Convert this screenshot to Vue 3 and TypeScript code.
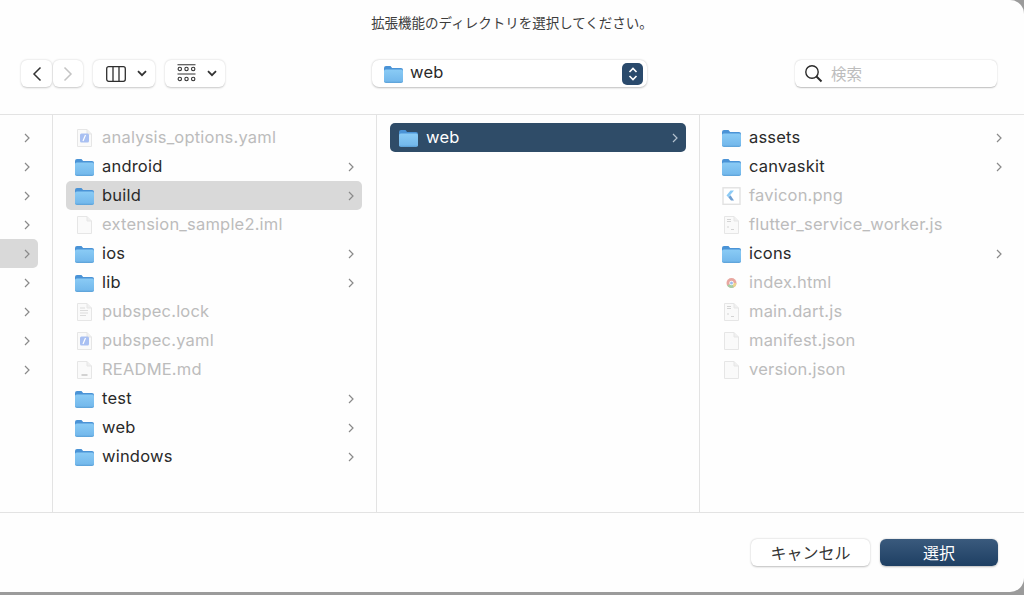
<template>
  <div class="window">
    <div class="title">拡張機能のディレクトリを選択してください。</div>

    <div class="toolbar">
      <div class="tools-left">
        <div class="nav-pair">
          <button class="tool nav">
            <svg width="12" height="16" viewBox="0 0 12 16"><path d="M9.500 1.500 3 8l6.500 6.500" fill="none" stroke="#333" stroke-width="1.500" /></svg>
          </button>
          <button class="tool nav next">
            <svg width="12" height="16" viewBox="0 0 12 16"><path d="M2.500 1.500 9 8l-6.500 6.500" fill="none" stroke="#c4c4c4" stroke-width="1.500" /></svg>
          </button>
        </div>
        <button class="tool view-columns">
          <svg width="20" height="16" viewBox="0 0 20 16" fill="none" stroke="#2e2e2e" stroke-width="1.300">
            <rect x="0.700" y="0.700" width="18.600" height="14.600" rx="2" />
            <path d="M7 1v14M13 1v14" />
          </svg>
          <svg class="caret" width="10" height="7" viewBox="0 0 10 7"><path d="m1 1.200 4 4 4-4" fill="none" stroke="#333" stroke-width="1.800" /></svg>
        </button>
        <button class="tool view-group">
          <svg class="group-icon" width="19" height="18" viewBox="0 0 19 18" fill="none" stroke="#333" stroke-width="1.100">
            <path d="M0.500 0.800h18M0.500 10h18" />
            <circle cx="2.800" cy="5" r="1.700" /><circle cx="9.500" cy="5" r="1.700" /><circle cx="16.200" cy="5" r="1.700" />
            <circle cx="2.800" cy="15" r="1.700" /><circle cx="9.500" cy="15" r="1.700" /><circle cx="16.200" cy="15" r="1.700" />
          </svg>
          <svg class="caret" width="10" height="7" viewBox="0 0 10 7"><path d="m1 1.200 4 4 4-4" fill="none" stroke="#333" stroke-width="1.800" /></svg>
        </button>
      </div>

      <div class="path-select">
        <svg class="folder" width="19" height="18" viewBox="0 0 19 18">
          <path d="M0 3a2 2 0 0 1 2-2h4.500l1.600 2H17a2 2 0 0 1 2 2v3H0Z" fill="#4a93d6" />
          <rect y="4.500" width="19" height="13.500" rx="1.800" fill="url(#folderFill)" />
        </svg>
        <span class="path-name">web</span>
        <span class="stepper">
          <svg width="12" height="16" viewBox="0 0 12 16" fill="none" stroke="#fff" stroke-width="1.600"><path d="m2.500 6 3.500-3.500L9.500 6M2.500 10 6 13.500 9.500 10" /></svg>
        </span>
      </div>

      <div class="tools-right">
        <div class="search">
          <svg width="19" height="19" viewBox="0 0 19 19" fill="none" stroke="#2b2b2b">
            <circle cx="8" cy="8" r="6.200" stroke-width="1.400" />
            <path d="m12.500 12.500 5 5" stroke-width="1.900" />
          </svg>
          <span class="search-text">検索</span>
        </div>
      </div>
    </div>

    <div class="browser">
      <div class="column stub">
        <div v-for="(on, i) in stubRows" :key="i" class="stub-row" :class="{ current: on }">
          <svg width="6" height="10" viewBox="0 0 6 10"><path d="m1 1 4 4-4 4" fill="none" stroke="#8a8a8a" stroke-width="1.200" /></svg>
        </div>
      </div>

      <div v-for="(col, c) in columns" :key="c" class="column" :class="'col' + c">
        <div
          v-for="row in col"
          :key="row.name"
          class="row"
          :class="{ off: row.icon !== 'folder', open: row.state === 'open', active: row.state === 'active' }"
        >
          <svg v-if="row.icon === 'folder'" class="folder" width="19" height="18" viewBox="0 0 19 18">
            <path d="M0 3a2 2 0 0 1 2-2h4.500l1.600 2H17a2 2 0 0 1 2 2v3H0Z" fill="#4a93d6" />
            <rect y="4.500" width="19" height="13.500" rx="1.800" fill="url(#folderFill)" />
          </svg>

          <svg v-else class="folder" width="19" height="18" viewBox="0 0 19 18">
            <template v-if="row.icon === 'chrome'">
              <circle cx="9.500" cy="9" r="5" fill="#e8a7a0" />
              <path d="M9.500 9 5.200 11.500A5 5 0 0 0 12 13.300Z" fill="#a5cfa5" />
              <path d="M9.500 9 12 13.300A5 5 0 0 0 14.500 9Z" fill="#ecd58f" />
              <circle cx="9.500" cy="9" r="2.200" fill="#fff" />
              <circle cx="9.500" cy="9" r="1.500" fill="#9dbdee" />
            </template>
            <template v-else-if="row.icon === 'png'">
              <rect x="1" y="0.800" width="17" height="16.500" fill="#fff" stroke="#e2e2e2" stroke-width="1.400" />
              <path d="M12 3.500H8.500L4.500 8.500l1.800 1.800Z" fill="#8ccbf6" />
              <path d="M6.300 10.300 8.500 8.300 12 13.500H9Z" fill="#6f9fd2" />
            </template>
            <template v-else>
              <path d="M2.500 0.500H12L16.500 5v12.500h-14Z" fill="#fafafa" stroke="#e6e6e6" />
              <path d="M12 0.500V5h4.500" fill="#f0f0f0" stroke="#e6e6e6" />
              <template v-if="row.icon === 'yaml'">
                <rect x="5" y="4.500" width="9" height="9" rx="1.500" fill="#a9c0f2" />
                <path d="M10.500 6 8 12" stroke="#fff" stroke-width="1.200" />
              </template>
              <path v-else-if="row.icon === 'lines'" d="M5 5h5M5 7.500h8M5 10h8M5 12.500h6" stroke="#dcdcdc" />
              <path v-else-if="row.icon === 'code'" d="M5 3.500h4M5 5.500h4M5 11h2M9 13.500h3" stroke="#d4d4d4" />
              <path v-else-if="row.icon === 'md'" d="M6.500 14h6" stroke="#c4c4c4" stroke-width="1.500" />
            </template>
          </svg>

          <span class="name">{{ row.name }}</span>
          <svg v-if="row.icon === 'folder'" class="chev" width="6" height="10" viewBox="0 0 6 10">
            <path d="m1 1 4 4-4 4" fill="none" stroke-width="1.200" />
          </svg>
        </div>
      </div>
    </div>

    <div class="footer">
      <button class="btn">キャンセル</button>
      <button class="btn primary">選択</button>
    </div>

    <svg class="defs" width="0" height="0">
      <defs>
        <linearGradient id="folderFill" x1="0" y1="0" x2="0" y2="1">
          <stop offset="0" stop-color="#8acbf5" />
          <stop offset="0.850" stop-color="#74b9ec" />
          <stop offset="1" stop-color="#5a9fd6" />
        </linearGradient>
      </defs>
    </svg>
  </div>
</template>

<script setup lang="ts">
interface Row {
  name: string
  icon: 'folder' | 'yaml' | 'plain' | 'lines' | 'md' | 'png' | 'code' | 'chrome'
  state?: 'open' | 'active'
}

const stubRows = [false, false, false, false, true, false, false, false, false]

const columns: Row[][] = [
  [
    { name: 'analysis_options.yaml', icon: 'yaml' },
    { name: 'android', icon: 'folder' },
    { name: 'build', icon: 'folder', state: 'open' },
    { name: 'extension_sample2.iml', icon: 'plain' },
    { name: 'ios', icon: 'folder' },
    { name: 'lib', icon: 'folder' },
    { name: 'pubspec.lock', icon: 'lines' },
    { name: 'pubspec.yaml', icon: 'yaml' },
    { name: 'README.md', icon: 'md' },
    { name: 'test', icon: 'folder' },
    { name: 'web', icon: 'folder' },
    { name: 'windows', icon: 'folder' },
  ],
  [{ name: 'web', icon: 'folder', state: 'active' }],
  [
    { name: 'assets', icon: 'folder' },
    { name: 'canvaskit', icon: 'folder' },
    { name: 'favicon.png', icon: 'png' },
    { name: 'flutter_service_worker.js', icon: 'code' },
    { name: 'icons', icon: 'folder' },
    { name: 'index.html', icon: 'chrome' },
    { name: 'main.dart.js', icon: 'code' },
    { name: 'manifest.json', icon: 'plain' },
    { name: 'version.json', icon: 'plain' },
  ],
]
</script>

<style>
html,
body {
  margin: 0;
  background: #9b9b9b;
}
</style>

<style scoped>
.window {
  width: 1024px;
  height: 592px;
  display: flex;
  flex-direction: column;
  background: #fefefe;
  border-radius: 0 14px 14px 0;
  overflow: hidden;
  font-family: Inter, 'Noto Sans CJK JP', sans-serif;
  color: #2a2a2a;
}

.title {
  height: 44px;
  padding-top: 13px;
  box-sizing: border-box;
  text-align: center;
  font-family: 'Noto Sans CJK JP', sans-serif;
  font-size: 13.500px;
  line-height: 18px;
  color: #3c3c3c;
}

.toolbar {
  height: 70px;
  box-sizing: border-box;
  padding: 16px 27px 0 21px;
  display: grid;
  grid-template-columns: 351px 275px 1fr;
  align-items: start;
}

.tools-left {
  display: flex;
  gap: 10px;
}

.nav-pair {
  display: flex;
  gap: 1px;
}

.tool {
  height: 27px;
  padding: 0;
  display: flex;
  align-items: center;
  background: #fff;
  border: none;
  border-radius: 6px;
  box-shadow: 0 0.500px 2px rgba(0, 0, 0, 0.22);
}

.nav {
  width: 31px;
  justify-content: center;
}

.next {
  width: 30px;
}

.view-columns {
  width: 62px;
  padding-left: 13px;
  gap: 11px;
}

.view-group {
  width: 60px;
  padding-left: 12px;
  gap: 11px;
}

.group-icon {
  margin-top: -2px;
}

.caret {
  flex: none;
}

.path-select {
  height: 27px;
  display: flex;
  align-items: center;
  padding: 0 4px 0 12px;
  background: #fff;
  border-radius: 7px;
  box-shadow: 0 0.500px 2px rgba(0, 0, 0, 0.26);
}

.path-name {
  margin-left: 7px;
  padding-bottom: 3px;
  font-size: 16.500px;
  letter-spacing: 0.200px;
  flex: 1;
}

.stepper {
  width: 21px;
  height: 22px;
  display: flex;
  align-items: center;
  justify-content: center;
  border-radius: 5px;
  background: #2a4a6c;
}

.tools-right {
  display: flex;
  justify-content: flex-end;
}

.search {
  width: 202px;
  height: 27px;
  box-sizing: border-box;
  display: flex;
  align-items: center;
  gap: 8px;
  padding-left: 9px;
  background: #fff;
  border-radius: 6px;
  box-shadow: 0 0.500px 1.500px rgba(0, 0, 0, 0.26);
}

.search-text {
  padding-bottom: 2px;
  font-family: 'Noto Sans CJK JP', sans-serif;
  font-size: 15.500px;
  color: #bdbdbd;
}

.browser {
  flex: 1;
  display: flex;
  border-top: 1px solid #e3e3e3;
  border-bottom: 1px solid #e3e3e3;
}

.column {
  width: 323px;
  box-sizing: border-box;
  padding: 8px 13px;
  border-right: 1px solid #e3e3e3;
}

.stub {
  width: 53px;
  padding: 8px 14px 8px 0;
}

.stub-row {
  height: 29px;
  display: flex;
  align-items: center;
  padding-left: 24px;
  border-radius: 0 5px 5px 0;
}

.stub-row.current {
  background: #d9d9d9;
}

.col0 {
  width: 324px;
  padding-right: 14px;
}

.col2 {
  flex: 1;
  border-right: none;
  padding-right: 14px;
}

.row {
  height: 29px;
  display: flex;
  align-items: center;
  padding: 0 8px 0 9px;
  border-radius: 5px;
  font-size: 16.500px;
  letter-spacing: 0.200px;
}

.folder {
  flex: none;
}

.name {
  flex: 1;
  margin-left: 8px;
  padding-bottom: 2px;
  white-space: nowrap;
}

.chev {
  flex: none;
  stroke: #8a8a8a;
}

.off .name {
  color: #bcbcbc;
}

.open {
  background: #d9d9d9;
}

.active {
  background: #2f4c68;
  color: #fff;
}

.active .chev {
  stroke: #b4c2cf;
}

.footer {
  height: 79px;
  box-sizing: border-box;
  padding: 26px 26px 0 0;
  display: flex;
  justify-content: flex-end;
  gap: 10px;
}

.btn {
  width: 119px;
  height: 27px;
  padding: 0 0 2px;
  border: none;
  border-radius: 6px;
  background: #fff;
  box-shadow: 0 0.500px 2px rgba(0, 0, 0, 0.26);
  font-family: 'Noto Sans CJK JP', sans-serif;
  font-size: 16px;
  color: #333;
}

.primary {
  width: 118px;
  color: #fff;
  background: linear-gradient(#3a5a7d, #1e3f63);
}

.defs {
  position: absolute;
}
</style>
